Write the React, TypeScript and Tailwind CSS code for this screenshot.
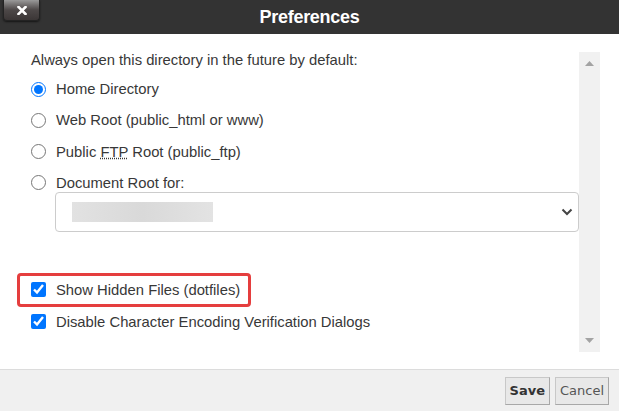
import { useState } from "react";

const radios = [
  { id: "home", label: "Home Directory" },
  { id: "webroot", label: "Web Root (public_html or www)" },
  { id: "ftp", label: "ftp" },
  { id: "docroot", label: "Document Root for:" },
];

function CloseButton() {
  return (
    <button
      type="button"
      aria-label="Close"
      className="absolute left-[3px] top-0 flex h-[21px] w-[37px] items-center justify-center rounded-b-[4px] border border-t-0 border-[#232323] bg-gradient-to-b from-[#9a9a9a] via-[#4d4848] to-[#3b3636] shadow-[0_1px_2px_rgba(0,0,0,0.6)]"
    >
      <svg width="10" height="9" viewBox="0 0 10 9" className="mt-[1px]">
        <path d="M1.5 1 L8.5 8 M8.5 1 L1.5 8" stroke="#fff" strokeWidth="2.6" strokeLinecap="square" />
      </svg>
    </button>
  );
}

function Scrollbar() {
  return (
    <div className="mt-[18px] mr-[19px] flex h-[300px] w-[21px] flex-col items-center justify-between bg-[#f1f1f1] py-[9px]">
      <svg width="9" height="5" viewBox="0 0 9 5">
        <path d="M0 5 L4.5 0 L9 5 Z" fill="#a3a3a3" />
      </svg>
      <svg width="9" height="5" viewBox="0 0 9 5">
        <path d="M0 0 L4.5 5 L9 0 Z" fill="#a3a3a3" />
      </svg>
    </div>
  );
}

export default function App() {
  const [dir, setDir] = useState("home");
  const [showHidden, setShowHidden] = useState(true);
  const [disableEnc, setDisableEnc] = useState(true);

  return (
    <div className="flex h-[411px] w-[619px] flex-col overflow-hidden bg-white font-['Liberation_Sans',Arial,sans-serif] text-[14.8px] text-[#383838]">
      <div className="relative h-[34px] shrink-0 bg-[#333]">
        <CloseButton />
        <h1 className="text-center text-[18px] font-bold leading-[34px] tracking-[-0.3px] text-white">
          Preferences
        </h1>
      </div>

      <div className="flex flex-1">
        <div className="flex-1 pl-[31px]">
          <p className="mt-[16px] leading-[20px]">Always open this directory in the future by default:</p>

          <div className="mt-[10px] flex flex-col gap-[13.3px]">
            {radios.map(r => (
              <label key={r.id} className="flex h-[18px] items-center">
                <input
                  type="radio"
                  name="dir"
                  checked={dir === r.id}
                  onChange={() => setDir(r.id)}
                  className="m-0 h-[15px] w-[15px] accent-[#0075ff]"
                />
                <span className="ml-[10px]">
                  {r.id === "ftp" ? (
                    <>
                      Public <abbr title="File Transfer Protocol">FTP</abbr> Root (public_ftp)
                    </>
                  ) : (
                    r.label
                  )}
                </span>
              </label>
            ))}
          </div>

          <div className="ml-[24px] flex h-[40px] items-center justify-between rounded-[4px] border border-[#cccccc] pl-[16px] pr-[5px]">
            <div className="h-[20px] w-[141px] bg-gradient-to-r from-[#e2e2e2] via-[#d9d9d9] to-[#e3e3e3]" />
            <svg width="12" height="8" viewBox="0 0 12 8">
              <path d="M1.5 1.5 L6 6 L10.5 1.5" fill="none" stroke="#444" strokeWidth="2" />
            </svg>
          </div>

          <label className="-ml-[14px] mt-[41px] flex h-[34px] w-[234px] items-center rounded-[4px] border-[3px] border-[#e53e3e] pl-[11px]">
            <input
              type="checkbox"
              checked={showHidden}
              onChange={e => setShowHidden(e.target.checked)}
              className="m-0 h-[15px] w-[15px] accent-[#0075ff]"
            />
            <span className="ml-[10px]">Show Hidden Files (dotfiles)</span>
          </label>

          <label className="mt-[5px] flex h-[20px] items-center">
            <input
              type="checkbox"
              checked={disableEnc}
              onChange={e => setDisableEnc(e.target.checked)}
              className="m-0 h-[15px] w-[15px] accent-[#0075ff]"
            />
            <span className="ml-[10px]">Disable Character Encoding Verification Dialogs</span>
          </label>
        </div>

        <Scrollbar />
      </div>

      <div className="flex h-[42px] shrink-0 items-center justify-end gap-[5px] border-t border-[#dcdcdc] bg-[#f0f0f0] pr-[10px] font-['DejaVu_Sans',Verdana,sans-serif] text-[13px]">
        <button
          type="button"
          className="h-[28px] border border-[#c8c8c8] border-b-[#a8a8a8] border-r-[#a8a8a8] bg-[#e8e8e8] px-[4px] font-bold text-[#333]"
        >
          Save
        </button>
        <button
          type="button"
          className="h-[28px] border border-[#c8c8c8] border-b-[#a8a8a8] border-r-[#a8a8a8] bg-[#e8e8e8] px-[4px] text-[#555]"
        >
          Cancel
        </button>
      </div>
    </div>
  );
}
